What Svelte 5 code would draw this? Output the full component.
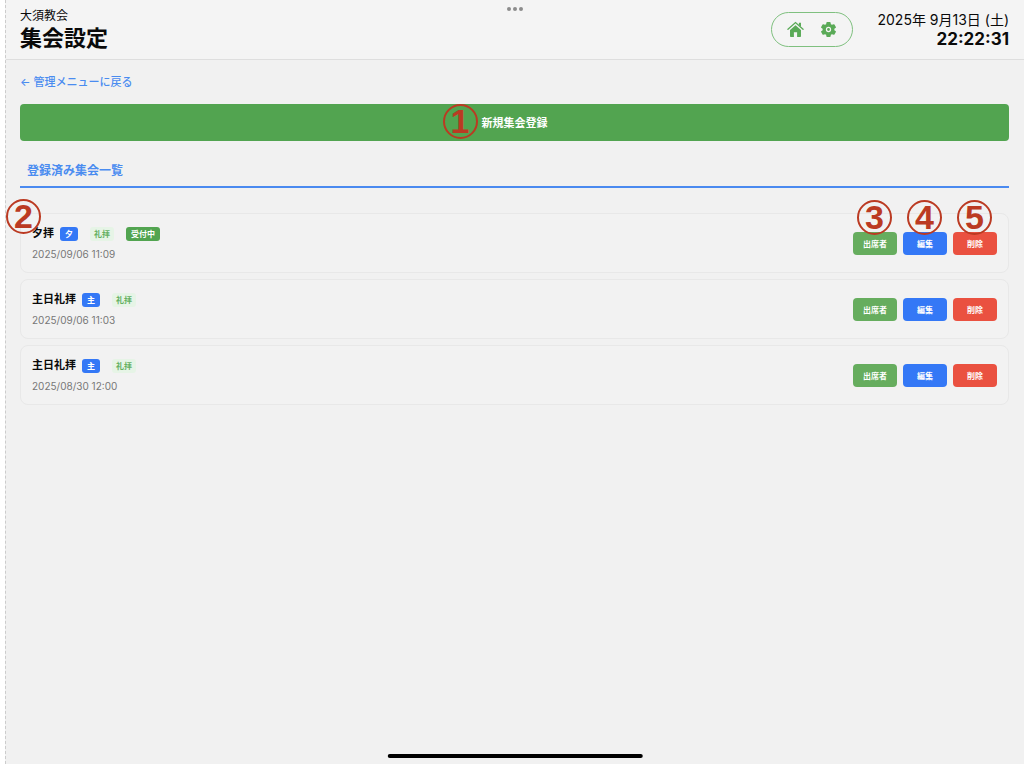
<script lang="ts">
	const church = "大須教会";

	type Meeting = {
		name: string;
		mark: string;
		kind: string;
		status: string;
		date: string;
	};

	let meetings: Meeting[] = [
		{ name: "夕拝", mark: "夕", kind: "礼拝", status: "受付中", date: "2025/09/06 11:09" },
		{ name: "主日礼拝", mark: "主", kind: "礼拝", status: "", date: "2025/09/06 11:03" },
		{ name: "主日礼拝", mark: "主", kind: "礼拝", status: "", date: "2025/08/30 12:00" },
	];

	const actions = [
		{ label: "出席者", style: "attend", step: 3 },
		{ label: "編集", style: "edit", step: 4 },
		{ label: "削除", style: "delete", step: 5 },
	];

	function removeMeeting(index: number, style: string) {
		if (style === "delete") {
			meetings = meetings.filter((_, i) => i !== index);
		}
	}
</script>

<div class="screen">
	<div class="multitask"><i></i><i></i><i></i></div>

	<header>
		<div class="titles">
			<p class="church">{church}</p>
			<h1>集会設定</h1>
		</div>
		<div class="header-right">
			<nav>
				<a href="#home" aria-label="ホーム">
					<svg viewBox="0 0 18 18" width="17" height="17">
						<path d="M9 4.4 3.2 9.5V16.2a.8.8 0 0 0 .8.8h3.3v-5h3.4v5H14a.8.8 0 0 0 .8-.8V9.5z" />
						<path d="M12.6 1.8h2.2v4.4l-2.2-2z" />
						<path class="roof" d="M1 8.7 9 1.7l8 7" />
					</svg>
				</a>
				<a href="#settings" aria-label="設定">
					<svg viewBox="0 0 18 18" width="17" height="17">
						<path
							fill-rule="evenodd"
							d="M7.4 1h3.2q.5 0 .6.5l.3 1.9 1.2.7 1.8-.7q.5-.2.8.3l1.5 2.6q.3.5-.1.8l-1.5 1.2v1.4l1.5 1.2q.4.3.1.8l-1.5 2.6q-.3.5-.8.3l-1.8-.7-1.2.7-.3 1.9q-.1.5-.6.5H7.4q-.5 0-.6-.5l-.3-1.9-1.2-.7-1.8.7q-.5.2-.8-.3l-1.5-2.6q-.3-.5.1-.8l1.5-1.2V8.3L1.3 7.1q-.4-.3-.1-.8l1.5-2.6q.3-.5.8-.3l1.8.7 1.2-.7.3-1.9q.1-.5.6-.5zM9 6.2a2.8 2.8 0 1 0 0 5.6 2.8 2.8 0 0 0 0-5.6z"
						/>
						<circle cx="9" cy="9" r="1.5" />
					</svg>
				</a>
			</nav>
			<div class="clock">
				<p class="day">2025年 9月13日 (土)</p>
				<p class="time">22:22:31</p>
			</div>
		</div>
	</header>

	<main>
		<a class="back" href="#menu">← 管理メニューに戻る</a>

		<button class="create" type="button">
			<span class="create-label">
				<span class="step step-create">1</span>
				新規集会登録
			</span>
		</button>

		<h2>登録済み集会一覧</h2>

		<ul>
			{#each meetings as meeting, i}
				<li>
					{#if i === 0}
						<span class="step step-card">2</span>
					{/if}
					<div class="info">
						<div class="name-row">
							<span class="name">{meeting.name}</span>
							<span class="badge mark">{meeting.mark}</span>
							<span class="badge kind">{meeting.kind}</span>
							{#if meeting.status}
								<span class="badge status">{meeting.status}</span>
							{/if}
						</div>
						<p class="date">{meeting.date}</p>
					</div>
					<div class="actions">
						{#each actions as action}
							<div class="action">
								<button
									class={action.style}
									type="button"
									on:click={() => removeMeeting(i, action.style)}
								>
									{action.label}
								</button>
								{#if i === 0}
									<span class="step step-action">{action.step}</span>
								{/if}
							</div>
						{/each}
					</div>
				</li>
			{/each}
		</ul>
	</main>

	<div class="home-bar"></div>
</div>

<style>
	:global(body) {
		background: #fff;
	}

	.screen {
		position: relative;
		box-sizing: border-box;
		min-height: 100vh;
		margin-left: 5px;
		border-left: 1px dashed #ccc;
		background: #f1f1f1;
		color: #0a0a0a;
		font-family: Inter, "Noto Sans CJK JP", sans-serif;
	}

	p,
	h1,
	h2,
	ul {
		margin: 0;
		padding: 0;
	}

	button {
		border: 0;
		color: #fff;
		font-family: inherit;
		font-weight: 700;
		cursor: pointer;
	}

	a {
		text-decoration: none;
	}

	.multitask {
		position: absolute;
		top: 7px;
		left: 0;
		right: 0;
		display: flex;
		justify-content: center;
		gap: 2px;
	}

	.multitask i {
		width: 4px;
		height: 4px;
		border-radius: 50%;
		background: #8c8c8c;
	}

	header {
		display: flex;
		justify-content: space-between;
		align-items: center;
		box-sizing: border-box;
		height: 60px;
		padding: 0 15px 0 14px;
		border-bottom: 1px solid #dedede;
		background: #f4f4f4;
	}

	.church {
		font-size: 12px;
		line-height: 16px;
	}

	h1 {
		font-size: 22px;
		line-height: 28px;
	}

	.header-right {
		display: flex;
		align-items: center;
		gap: 24px;
	}

	nav {
		display: flex;
		align-items: center;
		gap: 16px;
		box-sizing: border-box;
		height: 35px;
		padding: 0 15px;
		border: 1px solid #7fc07f;
		border-radius: 18px;
	}

	nav a {
		display: flex;
	}

	svg {
		fill: #5aaa57;
	}

	.roof {
		fill: none;
		stroke: #5aaa57;
		stroke-width: 1.4;
		stroke-linecap: round;
	}

	.clock {
		padding-bottom: 2px;
		text-align: right;
	}

	.day {
		font-size: 14px;
		line-height: 20px;
	}

	.time {
		font-size: 17px;
		font-weight: 700;
		line-height: 18px;
	}

	main {
		padding: 14px 15px 14px 14px;
	}

	.back {
		display: block;
		margin-bottom: 14px;
		color: #4a8cf0;
		font-size: 11px;
		font-weight: 500;
		line-height: 16px;
	}

	.create {
		display: block;
		width: 100%;
		height: 37px;
		padding: 0 0 2px;
		border-radius: 4px;
		background: #52a450;
		font-size: 11px;
	}

	.create-label {
		position: relative;
	}

	h2 {
		margin: 20px 0 25px;
		padding: 0 7px 5px;
		border-bottom: 2px solid #4a8af0;
		color: #4a8cf0;
		font-size: 12px;
		line-height: 20px;
	}

	ul {
		display: flex;
		flex-direction: column;
		gap: 6px;
		list-style: none;
	}

	li {
		position: relative;
		display: flex;
		justify-content: space-between;
		align-items: center;
		padding: 10px 11px;
		border: 1px solid #e8e8e8;
		border-radius: 8px;
		background: #f2f2f2;
	}

	.name-row {
		display: flex;
		align-items: center;
	}

	.name {
		margin-right: 6px;
		font-size: 11px;
		font-weight: 700;
		line-height: 18px;
	}

	.badge {
		margin-top: 2px;
		padding: 0 4px;
		border-radius: 3px;
		font-size: 8px;
		font-weight: 700;
		line-height: 14px;
	}

	.mark {
		padding: 0 5px;
		background: #3478f6;
		color: #fff;
	}

	.kind {
		margin-left: 12px;
		background: #e6f4e6;
		color: #64b062;
	}

	.status {
		margin-left: 12px;
		padding: 0 5px;
		background: #52a450;
		color: #fff;
	}

	.date {
		margin-top: 4px;
		color: #777;
		font-size: 10px;
		line-height: 16px;
	}

	.actions {
		display: flex;
		gap: 6px;
	}

	.action {
		position: relative;
	}

	.action button {
		display: block;
		width: 44px;
		height: 23px;
		padding: 0;
		border-radius: 4px;
		font-size: 8px;
	}

	.attend {
		background: #66ad5e;
	}

	.edit {
		background: #3478f6;
	}

	.delete {
		background: #ea5140;
	}

	.step {
		position: absolute;
		box-sizing: border-box;
		width: 35px;
		height: 35px;
		border: 2px solid #bb3a22;
		border-radius: 50%;
		color: #bb3a22;
		font-family: "Liberation Sans", sans-serif;
		font-size: 34px;
		font-weight: 700;
		line-height: 31px;
		text-align: center;
		pointer-events: none;
	}

	.step-create {
		top: -12px;
		right: 100%;
		margin-right: 4px;
	}

	.step-card {
		top: -15px;
		left: -15px;
	}

	.step-action {
		bottom: 20px;
		left: 4px;
	}

	.home-bar {
		position: absolute;
		bottom: 6px;
		left: 50%;
		width: 25%;
		height: 4px;
		border-radius: 2px;
		background: #000;
		transform: translateX(-50%);
	}
</style>
